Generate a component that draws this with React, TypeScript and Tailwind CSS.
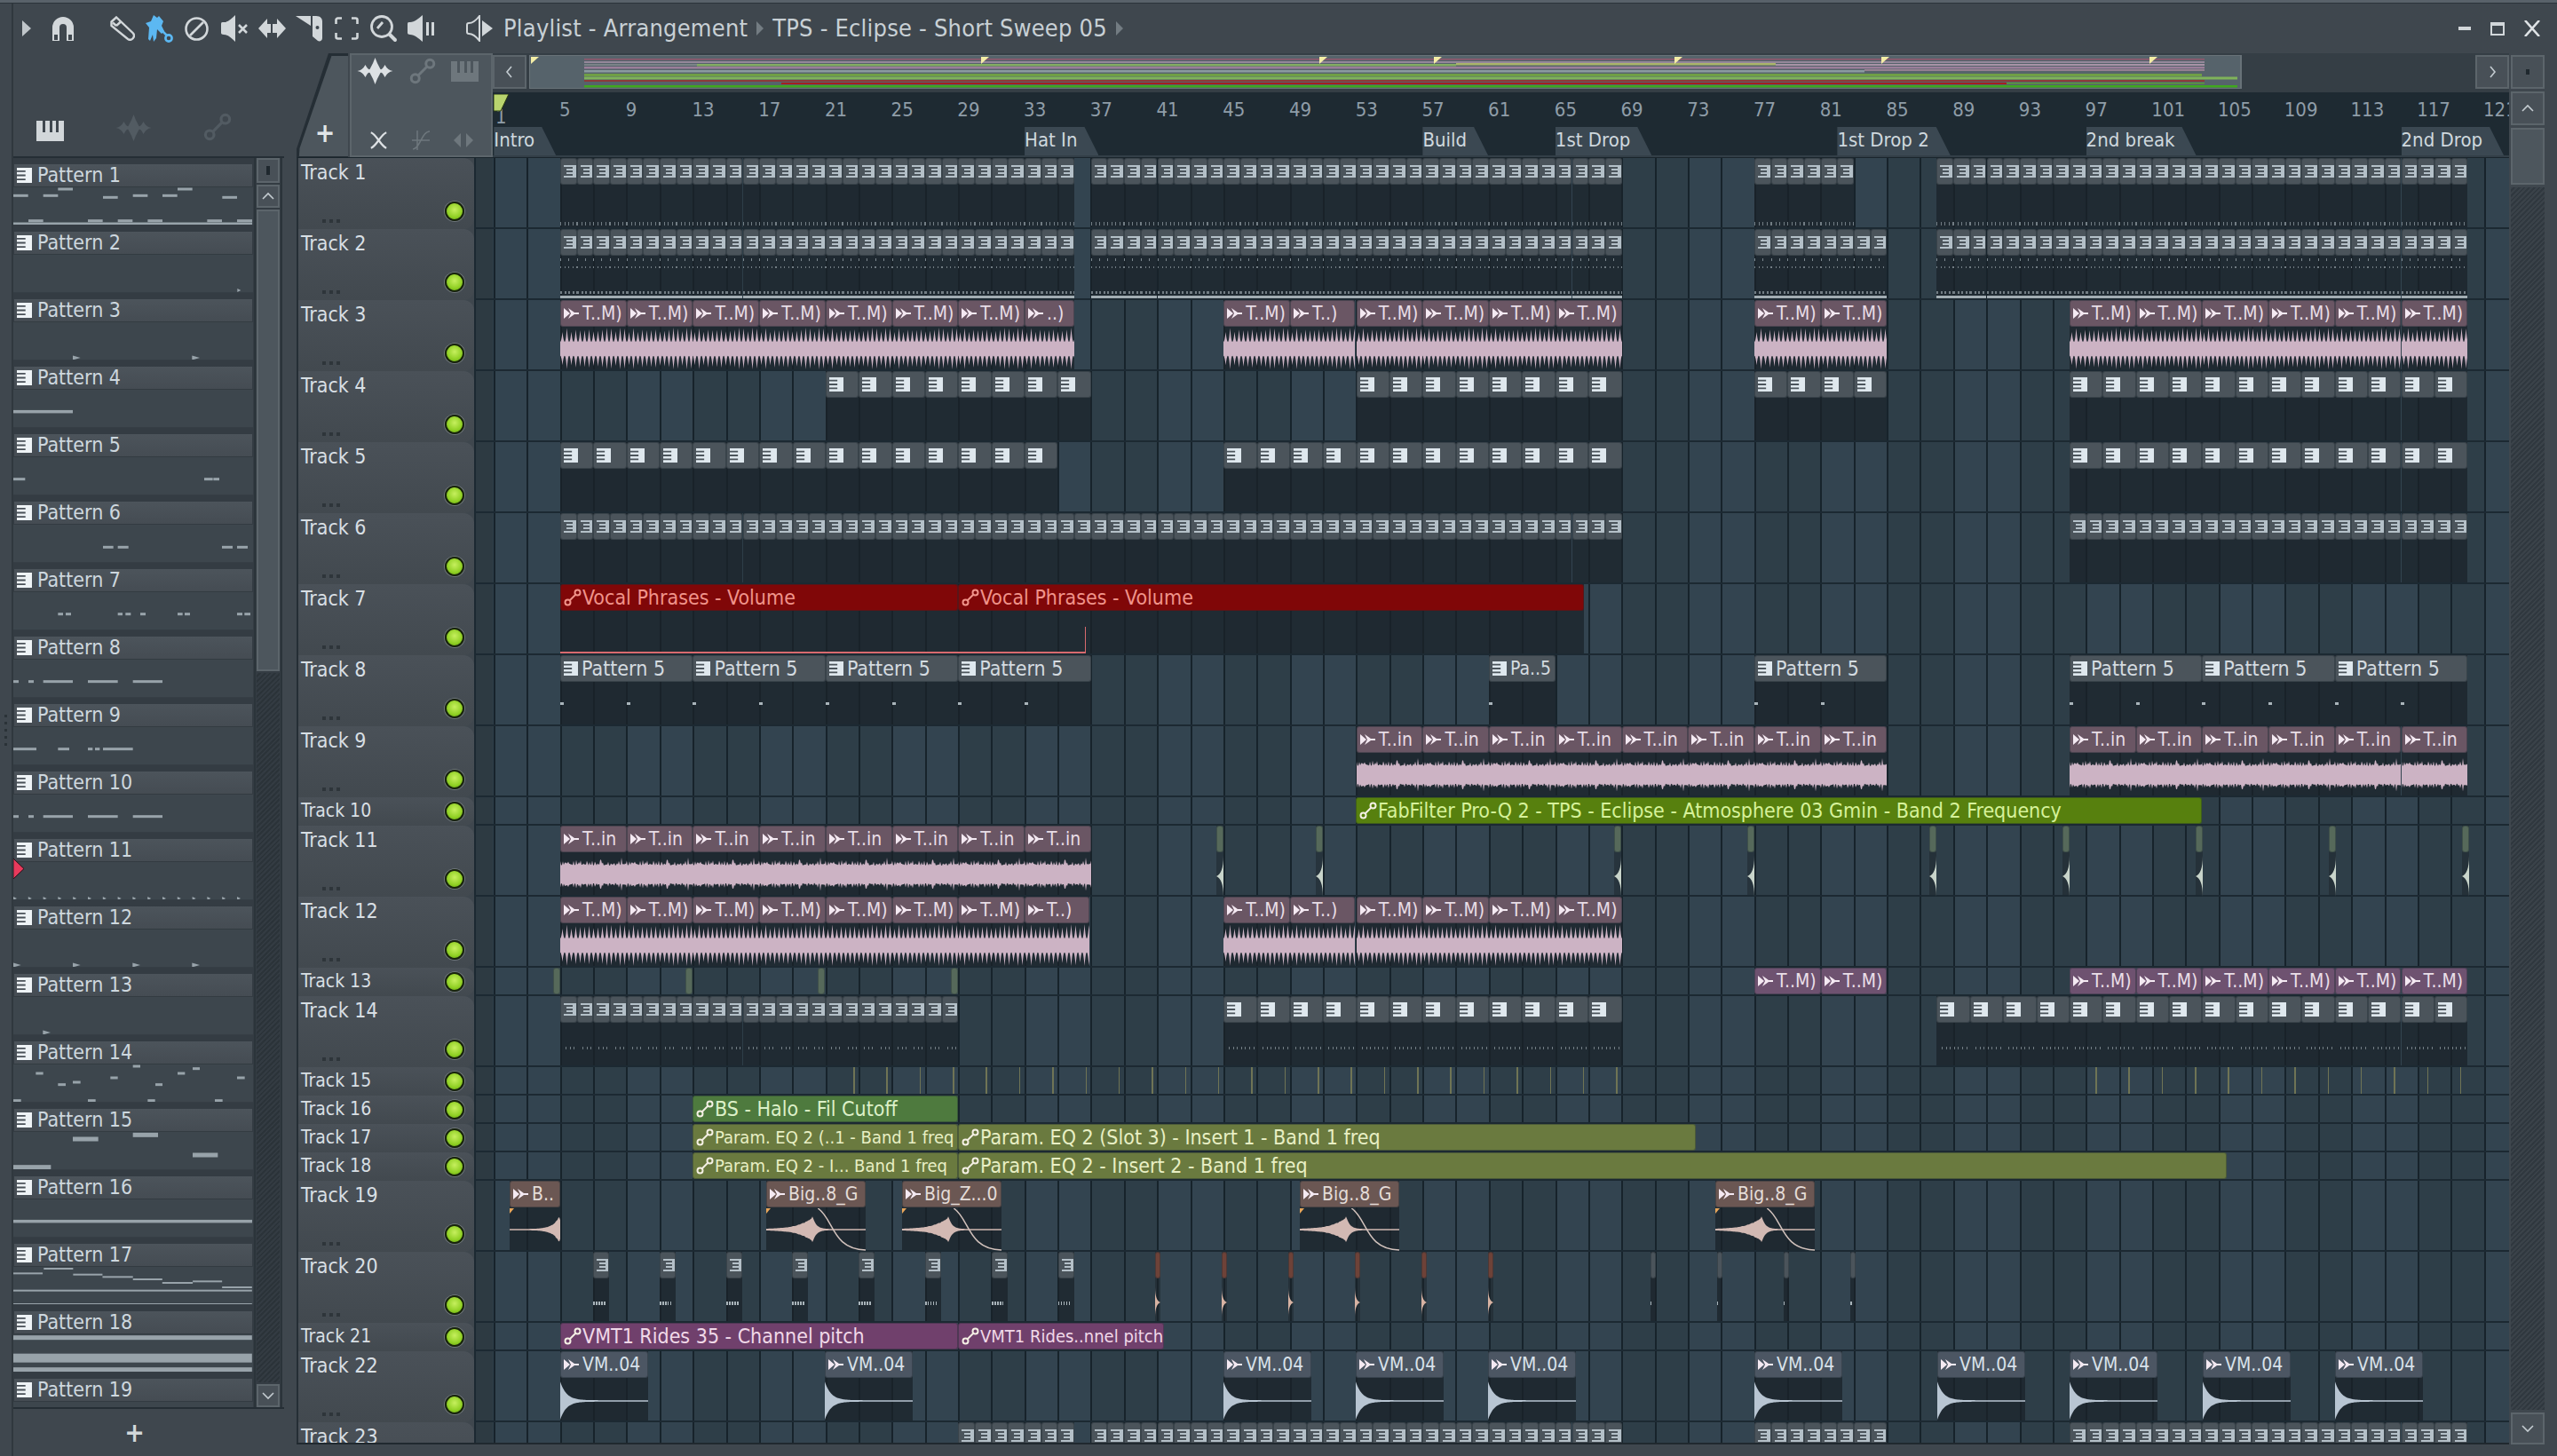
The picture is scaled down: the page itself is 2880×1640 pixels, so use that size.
import type { ReactNode } from 'react';

const BAR = 18.68;
const GRID_LEFT = 536;
const B = (bar: number) => 556.3 + (bar - 1) * BAR;

type Body = 'none' | 'ticks' | 'dots' | 'sparse' | 'mid' | 'comb' | 'noise' | 'big' | 'bigEnd' | 'vm' | 'spike' | 'rustSpike' | 'tiny' | 'auto1' | 'auto2';
type Tone = 'pat' | 'audio' | 'audio13' | 'brown' | 'vm' | 'thin' | 'red' | 'lime' | 'green' | 'olive' | 'purple' | 'rust' | 'tick';
type Icon = 'piano' | 'audio' | 'auto' | 'none';
type Item = { x: number; w: number; label?: string; tone: Tone; icon: Icon; body: Body };
type Track = { name: string; small?: boolean; items: Item[] };

const TONES: Record<Tone, string> = {
  pat: 'bg-[#4b545b] text-[#d4dbe0]',
  audio: 'bg-[#6a5664] text-[#e8dde6]',
  audio13: 'bg-[#6e5270] text-[#eadfe8]',
  brown: 'bg-[#6b5753] text-[#e4dcd8]',
  vm: 'bg-[#4c5663] text-[#d9e2ea]',
  thin: 'bg-[#56695a] text-[#d9e2ea]',
  red: 'bg-[#800708] text-[#f0938a]',
  lime: 'bg-[#57800e] text-[#d6f29a]',
  green: 'bg-[#4e7a3e] text-[#dcf0c8]',
  olive: 'bg-[#6a7a3f] text-[#e8efc4]',
  purple: 'bg-[#70406c] text-[#f0d8e8]',
  rust: 'bg-[#6e4238] text-[#e4dcd8]',
  tick: 'bg-[#56695a]',
};

const cells = (ranges: [number, number][], step: number, body: Body): Item[] =>
  ranges.flatMap(([from, to]) => {
    const out: Item[] = [];
    for (let b = from; b < to - 0.01; b += step) out.push({ x: B(b), w: step * BAR, tone: 'pat', icon: 'piano', body });
    return out;
  });

const run = (bars: number[], w: number, label: string, tone: Tone, icon: Icon, body: Body): Item[] =>
  bars.map((b) => ({ x: B(b), w: w * BAR, label, tone, icon, body }));

const step = (from: number, n: number, by = 4) => Array.from({ length: n }, (_, i) => from + i * by);

const px = (xs: number[], w: number, tone: Tone, icon: Icon, body: Body): Item[] =>
  xs.map((x) => ({ x, w, tone, icon, body }));

const TRACKS: Track[] = [
  { name: 'Track 1', items: cells([[5, 21], [21, 36], [37, 45], [45, 53], [53, 69], [77, 83], [88, 96], [96, 104], [104, 112], [112, 119.7]], 1, 'ticks') },
  { name: 'Track 2', items: cells([[5, 36], [37, 69], [77, 85], [88, 120]], 1, 'dots') },
  {
    name: 'Track 3',
    items: [
      ...run(step(5, 7), 4, 'T..M)', 'audio', 'audio', 'comb'),
      ...run([33], 3, '..)', 'audio', 'audio', 'comb'),
      ...run([45], 4, 'T..M)', 'audio', 'audio', 'comb'),
      ...run([49], 3.9, 'T..)', 'audio', 'audio', 'comb'),
      ...run(step(53, 4), 4, 'T..M)', 'audio', 'audio', 'comb'),
      ...run([77, 81], 4, 'T..M)', 'audio', 'audio', 'comb'),
      ...run(step(96, 6), 4, 'T..M)', 'audio', 'audio', 'comb'),
    ],
  },
  { name: 'Track 4', items: cells([[21, 37], [53, 69], [77, 85], [96, 120]], 2, 'none') },
  { name: 'Track 5', items: cells([[5, 35], [45, 69], [96, 120]], 2, 'none') },
  { name: 'Track 6', items: cells([[5, 37], [37, 69], [96, 120]], 1, 'none') },
  {
    name: 'Track 7',
    items: [
      { x: 631, w: 448, label: 'Vocal Phrases - Volume', tone: 'red', icon: 'auto', body: 'auto1' },
      { x: 1079, w: 705, label: 'Vocal Phrases - Volume', tone: 'red', icon: 'auto', body: 'auto2' },
    ],
  },
  {
    name: 'Track 8',
    items: [
      ...run([5, 13, 21, 29], 8, 'Pattern 5', 'pat', 'piano', 'sparse'),
      ...run([61], 4, 'Pa..5', 'pat', 'piano', 'sparse'),
      ...run([77], 8, 'Pattern 5', 'pat', 'piano', 'sparse'),
      ...run([96, 104, 112], 8, 'Pattern 5', 'pat', 'piano', 'sparse'),
    ],
  },
  {
    name: 'Track 9',
    items: [...run(step(53, 8), 4, 'T..in', 'audio', 'audio', 'noise'), ...run(step(96, 6), 4, 'T..in', 'audio', 'audio', 'noise')],
  },
  {
    name: 'Track 10',
    small: true,
    items: [{ x: 1527, w: 953, label: 'FabFilter Pro-Q 2 - TPS - Eclipse - Atmosphere 03 Gmin - Band 2 Frequency', tone: 'lime', icon: 'auto', body: 'none' }],
  },
  {
    name: 'Track 11',
    items: [
      ...run(step(5, 8), 4, 'T..in', 'audio', 'audio', 'noise'),
      ...px([1370, 1482, 1818, 1968, 2173, 2323, 2473, 2623, 2773], 8, 'thin', 'none', 'spike'),
    ],
  },
  {
    name: 'Track 12',
    items: [
      ...run(step(5, 7), 4, 'T..M)', 'audio', 'audio', 'comb'),
      ...run([33], 3.9, 'T..)', 'audio', 'audio', 'comb'),
      ...run([45], 4, 'T..M)', 'audio', 'audio', 'comb'),
      ...run([49], 3.9, 'T..)', 'audio', 'audio', 'comb'),
      ...run(step(53, 4), 4, 'T..M)', 'audio', 'audio', 'comb'),
    ],
  },
  {
    name: 'Track 13',
    small: true,
    items: [
      ...px([623, 772, 921, 1071], 8, 'thin', 'none', 'none'),
      ...run([77, 81], 4, 'T..M)', 'audio13', 'audio', 'none'),
      ...run(step(96, 6), 4, 'T..M)', 'audio13', 'audio', 'none'),
    ],
  },
  { name: 'Track 14', items: cells([[5, 29]], 1, 'mid').concat(cells([[45, 69], [88, 120]], 2, 'mid')) },
  { name: 'Track 15', small: true, items: [] },
  {
    name: 'Track 16',
    small: true,
    items: [{ x: 780, w: 299, label: 'BS - Halo - Fil Cutoff', tone: 'green', icon: 'auto', body: 'none' }],
  },
  {
    name: 'Track 17',
    small: true,
    items: [
      { x: 780, w: 299, label: 'Param. EQ 2 (..1 - Band 1 freq', tone: 'olive', icon: 'auto', body: 'none' },
      { x: 1079, w: 831, label: 'Param. EQ 2 (Slot 3) - Insert 1 - Band 1 freq', tone: 'olive', icon: 'auto', body: 'none' },
    ],
  },
  {
    name: 'Track 18',
    small: true,
    items: [
      { x: 780, w: 299, label: 'Param. EQ 2 - I... Band 1 freq', tone: 'olive', icon: 'auto', body: 'none' },
      { x: 1079, w: 1429, label: 'Param. EQ 2 - Insert 2 - Band 1 freq', tone: 'olive', icon: 'auto', body: 'none' },
    ],
  },
  {
    name: 'Track 19',
    items: [
      { x: 574, w: 57, label: 'B..', tone: 'brown', icon: 'audio', body: 'bigEnd' },
      { x: 863, w: 112, label: 'Big..8_G', tone: 'brown', icon: 'audio', body: 'big' },
      { x: 1016, w: 112, label: 'Big_Z...0', tone: 'brown', icon: 'audio', body: 'big' },
      { x: 1464, w: 112, label: 'Big..8_G', tone: 'brown', icon: 'audio', body: 'big' },
      { x: 1932, w: 112, label: 'Big..8_G', tone: 'brown', icon: 'audio', body: 'big' },
    ],
  },
  {
    name: 'Track 20',
    items: [
      ...px([668, 743, 818, 892, 967, 1042, 1117, 1192], 18, 'pat', 'piano', 'tiny'),
      ...px([1301, 1376, 1451, 1526, 1601, 1676], 6, 'rust', 'none', 'rustSpike'),
      ...px([1859, 1934, 2009, 2084], 6, 'pat', 'none', 'tiny'),
    ],
  },
  {
    name: 'Track 21',
    small: true,
    items: [
      { x: 631, w: 448, label: 'VMT1 Rides 35 - Channel pitch', tone: 'purple', icon: 'auto', body: 'none' },
      { x: 1079, w: 232, label: 'VMT1 Rides..nnel pitch', tone: 'purple', icon: 'auto', body: 'none' },
    ],
  },
  {
    name: 'Track 22',
    items: px([631, 929, 1378, 1527, 1676, 1976, 2182, 2331, 2481, 2630], 99, 'vm', 'audio', 'vm').map((c) => ({ ...c, label: 'VM..04' })),
  },
  { name: 'Track 23', items: cells([[29, 36], [37, 69], [77, 85], [96, 120]], 1, 'none') },
];

const MARKERS: [string, number][] = [
  ['Intro', 1],
  ['Hat In', 33],
  ['Build', 57],
  ['1st Drop', 65],
  ['1st Drop 2', 82],
  ['2nd break', 97],
  ['2nd Drop', 116],
];

type Note = { x: number; w: number; y: number; h: number; tri?: boolean };

const n = (x1: number, x2: number, yc: number, top: number, h = 3, tri = false): Note => ({
  x: (x1 - 48) / 3,
  w: (x2 - x1) / 3,
  y: (yc - top) / 3 - h / 2,
  h,
  tri,
});
const m = (x1: number, x2: number, yc: number, top: number, h = 2): Note => ({
  x: (x1 - 26) / 1.633,
  w: (x2 - x1) / 1.633,
  y: (yc - top) / 3 - h / 2,
  h,
});

const P8 = [n(48, 66, 534, 460), n(99, 117, 534, 460), n(149, 249, 534, 460), n(300, 401, 534, 460), n(452, 552, 534, 460)];

const PATTERNS: Note[][] = [
  [
    ...[[48, 98, 152], [149, 199, 152], [199, 249, 130], [351, 401, 158], [452, 502, 152], [552, 602, 152], [603, 653, 130], [754, 804, 158], [99, 149, 237], [300, 350, 237], [401, 451, 237], [502, 552, 237], [703, 753, 237], [804, 855, 237], [48, 855, 247]].map((a) => n(a[0], a[1], a[2], 124)),
  ],
  [n(805, 817, 472, 352, 4, true)],
  [n(249, 275, 700, 580, 5, true), n(652, 678, 700, 580, 5, true)],
  [n(48, 249, 882, 808, 3.5)],
  [n(48, 88, 1110, 1036), n(693, 722, 1110, 1036), n(724, 744, 1110, 1036)],
  [n(351, 386, 78, 2), n(401, 437, 78, 2), n(753, 789, 78, 2), n(804, 840, 78, 2)],
  [[199, 216], [225, 243], [401, 417], [427, 445], [477, 495], [603, 620], [627, 645], [804, 822], [829, 849]].map((a) => n(a[0], a[1], 306, 232)),
  P8,
  [[48, 126], [199, 237], [300, 316], [324, 340], [351, 452]].map((a) => n(a[0], a[1], 762, 688)),
  P8,
  step(48, 16, 50.4).map((x) => n(x, x + 12, 1267, 1144, 4, true)),
  [n(48, 74, 262, 142, 5, true), n(249, 275, 262, 142, 5, true), n(451, 477, 262, 142, 5, true), n(652, 678, 262, 142, 5, true)],
  [n(148, 174, 490, 370, 5, true)],
  [[124, 149, 628], [199, 225, 666], [249, 275, 658], [376, 401, 643], [452, 477, 604], [528, 552, 666], [603, 628, 628], [654, 678, 612], [804, 830, 643], [48, 74, 720], [300, 326, 720], [502, 527, 720], [729, 755, 720]].map((a) => n(a[0], a[1], a[2], 598)),
  [n(249, 335, 850, 826, 5), n(452, 537, 836, 826, 5), n(654, 739, 904, 826, 5), n(48, 175, 945, 826, 5)],
  [n(48, 855, 1128, 1054, 3.5)],
  [m(26, 80, 462, 440), m(82, 136, 446, 440), m(136, 190, 466, 440), m(190, 246, 474, 440), m(246, 300, 482, 440), m(300, 356, 494, 440), m(356, 410, 489, 440), m(410, 465, 509, 440), m(26, 465, 520, 440), m(26, 465, 566, 440)],
  [m(26, 465, 681, 670, 5), m(26, 465, 750, 670, 10), m(26, 465, 789, 670, 5)],
  [],
];

const OVERVIEW: [number, number, number, number, string][] = [
  [658, 2483, 66, 1.5, '#94586e'],
  [658, 2483, 69, 2, '#95879a'],
  [658, 785, 72, 2, '#7b8388'],
  [785, 1640, 72, 2.5, '#84ad62'],
  [1640, 2000, 71, 2.5, '#a9b46a'],
  [2000, 2483, 72, 2, '#a893a6'],
  [658, 2483, 75, 2.5, '#9a7e99'],
  [658, 2100, 79, 2.5, '#8b9aa0'],
  [2100, 2483, 78, 2, '#94808f'],
  [658, 2480, 83, 3, '#6f9f45'],
  [658, 2520, 86.5, 3, '#7fb35a'],
  [658, 2483, 90, 2, '#8d3a3a'],
  [880, 2260, 93, 2, '#a62020'],
  [2260, 2483, 93, 1.5, '#5d9c3a'],
  [658, 2520, 96, 2.5, '#3fa81e'],
];

// small deterministic noise so the waveforms stay stable between runs
const rnd = (i: number) => {
  const v = Math.sin(i * 12.9898) * 43758.5453;
  return v - Math.floor(v);
};

function wavePath(w: number, h: number, amp: (x: number, i: number) => number, dx = 1) {
  const c = h / 2;
  const top: string[] = [];
  const bottom: string[] = [];
  let i = 0;
  for (let x = 0; x <= w + dx; x += dx, i++) {
    const a = amp(x, i);
    top.push(`${x.toFixed(1)} ${(c - a).toFixed(1)}`);
    bottom.unshift(`${x.toFixed(1)} ${(c + a * 0.96).toFixed(1)}`);
  }
  return `M${top.join('L')}L${bottom.join('L')}Z`;
}

function combAmp(x: number, i: number) {
  const p = ((x % 5) + 5) % 5;
  const tooth = 1 - Math.abs(p - 2.5) / 2.5;
  return 8 + tooth * tooth * (11 + rnd(Math.floor(x / 5)) * 5);
}

function Wave({ w, kind }: { w: number; kind: 'comb' | 'noise' }) {
  const d =
    kind === 'comb'
      ? wavePath(w, 48, combAmp, 0.5)
      : wavePath(w, 48, (x, i) => 10 + rnd(i + x) * 3 + (i % 3 === 0 ? rnd(i) * 5 : 0) + (i % 23 === 0 ? 5 : 0));
  return (
    <svg className="absolute left-0 top-[1px]" width={w} height={48}>
      <path d={d} fill="#ccb3c4" />
    </svg>
  );
}

function BigWave({ w, end }: { w: number; end?: boolean }) {
  const peak = end ? w - 1 : w * 0.47;
  const d = wavePath(w, 48, (x, i) => {
    const k = x < peak ? Math.exp(-(peak - x) / (w * 0.13)) : Math.exp(-(x - peak) / 4);
    return 0.7 + k * 13 + (x < peak ? rnd(i) * k * 2 : 0);
  });
  return (
    <svg className="absolute left-0 top-[1px]" width={w} height={48}>
      <path d={d} fill="#d2b9b3" />
      <path d="M0 0 L5 0 L0 6 Z" fill="#e8a65a" />
      {!end && <path d={`M${w * 0.52} 0 C${w * 0.68} 12 ${w * 0.66} 46 ${w} 47`} fill="none" stroke="#d2c2bc" strokeWidth="1.5" />}
    </svg>
  );
}

function VmWave({ w }: { w: number }) {
  const d = wavePath(w, 44, (x) => 0.8 + 21 * Math.exp(-x / 7));
  return (
    <svg className="absolute left-0 top-[4px]" width={w} height={44}>
      <path d={d} fill="#b8c5d2" />
    </svg>
  );
}

function Spike({ w, color, flip }: { w: number; color: string; flip?: boolean }) {
  return (
    <svg className="absolute left-0 top-[4px]" width={w} height={46} viewBox="0 0 8 46">
      <path d={flip ? 'M0 0 C0 14 3 21 8 23 C3 25 0 32 0 46 Z' : 'M8 0 C8 14 5 21 0 23 C5 25 8 32 8 46 Z'} fill={color} />
    </svg>
  );
}

function ClipBody({ it }: { it: Item }) {
  switch (it.body) {
    case 'ticks':
      return <div className="absolute bottom-[2px] left-0 right-0 h-[4px] bg-[repeating-linear-gradient(90deg,#727d84_0,#727d84_1px,transparent_1px,transparent_4.6px)]" />;
    case 'dots':
      return (
        <>
          <div className="absolute left-0 right-0 top-[3px] h-[3px] bg-[repeating-linear-gradient(90deg,#7c878e_0,#7c878e_1px,transparent_1px,transparent_9.3px)]" />
          <div className="absolute left-0 right-0 top-[12px] h-[2px] bg-[repeating-linear-gradient(90deg,#727d84_0,#727d84_1px,transparent_1px,transparent_4.6px)]" />
          <div className="absolute bottom-[5px] left-0 right-0 h-[3px] bg-[repeating-linear-gradient(90deg,#727d84_0,#727d84_2px,transparent_2px,transparent_4.6px)]" />
          <div className="absolute bottom-0 left-0 right-0 h-[3px] bg-[#a2adb3]" />
        </>
      );
    case 'sparse': {
      const count = Math.max(1, Math.round(it.w / 74.7));
      return (
        <>
          {Array.from({ length: count }, (_, i) => (
            <div key={i} className="absolute top-[23px] h-[3px] w-[4px] bg-[#a9b4ba]" style={{ left: i * 74.72 }} />
          ))}
        </>
      );
    }
    case 'mid':
      return <div className="absolute left-[6px] right-0 top-[27px] h-[3px] bg-[repeating-linear-gradient(90deg,#727d84_0,#727d84_1px,transparent_1px,transparent_4.6px)]" />;
    case 'comb':
      return <Wave w={it.w} kind="comb" />;
    case 'noise':
      return <Wave w={it.w} kind="noise" />;
    case 'big':
      return <BigWave w={it.w} />;
    case 'bigEnd':
      return <BigWave w={it.w} end />;
    case 'vm':
      return <VmWave w={it.w} />;
    case 'spike':
      return <Spike w={it.w} color="#c8d4ca" />;
    case 'rustSpike':
      return <Spike w={it.w} color="#d8b3a3" flip />;
    case 'tiny':
      return <div className="absolute left-0 right-[4px] top-[26px] h-[4px] bg-[repeating-linear-gradient(90deg,#a9b4ba_0,#a9b4ba_1.5px,transparent_1.5px,transparent_3px)]" />;
    case 'auto1':
      return <div className="absolute bottom-0 left-0 right-0 h-[2px] bg-[#d86a6e]" />;
    case 'auto2':
      return (
        <>
          <div className="absolute bottom-0 left-0 h-[2px] w-[144px] bg-[#d86a6e]" />
          <div className="absolute bottom-0 left-[143px] h-[30px] w-[1px] bg-[#d86a6e]" />
        </>
      );
    default:
      return null;
  }
}

function PianoGlyph({ size = 14, color = '#b4c0c8', open }: { size?: number; color?: string; open?: boolean }) {
  return (
    <svg width={size} height={size} viewBox="0 0 14 14" className="shrink-0">
      <path fill={color} d={open ? 'M0 0H14V14H0V12H10V10H3V8H10V6H3V4H10V2H0Z' : 'M0 0H14V14H0V11.6H8V10H0V7.9H8V6.2H0V4H8V2.400H0Z'} />
    </svg>
  );
}

function AudioGlyph({ color = '#f4e9f2' }: { color?: string }) {
  return (
    <svg width={17} height={16} viewBox="0 0 17 16" className="shrink-0">
      <path fill={color} d="M0 2 L7 8 L0 14 Z M5 2 L12 7 H17 V9 H12 L5 14 L8 8 Z" />
    </svg>
  );
}

function AutoGlyph({ color = '#ffffff', size = 20 }: { color?: string; size?: number }) {
  return (
    <svg width={size} height={size} viewBox="0 0 20 20" fill="none" stroke={color} strokeWidth="2" className="shrink-0">
      <circle cx="4.5" cy="15.5" r="3" />
      <circle cx="15.5" cy="4.5" r="3" />
      <path d="M7 13L13 7" />
    </svg>
  );
}

function Clip({ it, small }: { it: Item; small?: boolean }) {
  const squeezed = it.label?.includes('..');
  const sizeClass = !squeezed ? 'text-[23px]' : it.icon === 'auto' ? 'text-[20px]' : 'text-[21px]';
  return (
    <div className="absolute bottom-0 top-0" style={{ left: it.x - GRID_LEFT, width: it.w }}>
      {!small && it.body !== 'spike' && it.body !== 'rustSpike' && <div className="absolute inset-0 bg-[#1b2329]/75" />}
      {!small && (it.body === 'spike' || it.body === 'rustSpike') && <div className="absolute inset-0 bg-[#1b2329]/50" />}
      <div className={`relative flex h-[30px] items-center overflow-hidden whitespace-nowrap rounded-[3px] border border-[#1f2a31]/40 pl-[3px] leading-none ${it.icon === 'auto' ? 'gap-[1px]' : 'gap-[4px]'} ${sizeClass} ${TONES[it.tone]}`}>
        {it.icon === 'piano' && (it.label || it.w > 30 ? <PianoGlyph color="#dfe8ee" size={16} /> : <PianoGlyph open />)}
        {it.icon === 'audio' && <AudioGlyph />}
        {it.icon === 'auto' && <AutoGlyph color={it.tone === 'red' ? '#f0938a' : '#f4efe4'} />}
        {it.label && <span>{it.label}</span>}
      </div>
      {!small && (
        <div className="absolute bottom-0 left-0 right-0 top-[30px]">
          <ClipBody it={it} />
        </div>
      )}
    </div>
  );
}

function GridRow({ track }: { track: Track }) {
  return (
    <div className={`relative shrink-0 border-b-2 border-[#1c2932] ${track.small ? 'h-[32px]' : 'h-[80px]'}`}>
      {track.name === 'Track 15' && (
        <>
          <div className="absolute bottom-0 left-[425px] top-0 w-[861px] bg-[repeating-linear-gradient(90deg,#6f7455_0,#6f7455_1.5px,transparent_1.5px,transparent_37.36px)]" />
          <div className="absolute bottom-0 left-[1824px] top-0 w-[416px] bg-[repeating-linear-gradient(90deg,#6f7455_0,#6f7455_1.5px,transparent_1.5px,transparent_37.36px)]" />
        </>
      )}
      {track.items.map((it, i) => (
        <Clip key={i} it={it} small={track.small} />
      ))}
    </div>
  );
}

function Led() {
  return <span className="block h-[22px] w-[22px] shrink-0 rounded-full border-2 border-[#18240c] bg-[radial-gradient(circle_at_50%_40%,#c6ef5e,#90d024_60%,#5a9a0c)] ring-1 ring-[#6e757a]" />;
}

function TrackHeader({ track }: { track: Track }) {
  if (track.small) {
    return (
      <div className="flex h-[32px] shrink-0 items-center justify-between rounded-r-[10px] bg-gradient-to-b from-[#4a5158] to-[#42494f] pl-[3px] pr-[11px] text-[21px] text-[#d8dfe4]">
        <span>{track.name}</span>
        <Led />
      </div>
    );
  }
  return (
    <div className="flex h-[80px] shrink-0 justify-between rounded-r-[12px] bg-gradient-to-b from-[#4a5158] to-[#42494f] pl-[3px] pr-[11px] text-[23px] text-[#d8dfe4]">
      <div className="flex flex-col justify-between pb-[7px] pt-[1px]">
        <span className="leading-[30px]">{track.name}</span>
        <span className="ml-[24px] flex gap-[4px]">
          <i className="h-[4px] w-[4px] bg-[#2e353a]" />
          <i className="h-[4px] w-[4px] bg-[#2e353a]" />
          <i className="h-[4px] w-[4px] bg-[#2e353a]" />
        </span>
      </div>
      <div className="pt-[49px]">
        <Led />
      </div>
    </div>
  );
}

function PatternRow({ index, notes }: { index: number; notes: Note[] }) {
  return (
    <div className="h-[76px] shrink-0">
      <div className="ml-[1px] flex h-[26px] w-[268px] items-center gap-[6px] border-b border-[#333b41] bg-gradient-to-b from-[#4c545b] to-[#454c53] pl-[3px] text-[23px] text-[#cdd7de]">
        <PianoGlyph size={17} color="#eef3f6" />
        <span>Pattern {index + 1}</span>
      </div>
      <svg width={270} height={43} className="block border-b border-[#363e45] bg-[#3d464d]">
        {notes.map((note, i) =>
          note.tri ? (
            <polygon key={i} points={`${note.x},${note.y} ${note.x + note.w},${note.y + note.h / 2} ${note.x},${note.y + note.h}`} fill="#98a3aa" />
          ) : (
            <rect key={i} x={note.x} y={note.y} width={note.w} height={note.h} fill="#98a3aa" />
          ),
        )}
      </svg>
    </div>
  );
}

function ScrollButton({ children, className }: { children?: ReactNode; className: string }) {
  return <div className={`flex items-center justify-center border-2 border-[#5c656b] bg-[#485057] ${className}`}>{children}</div>;
}

function Chevron({ d }: { d: string }) {
  return (
    <svg width={18} height={18} viewBox="0 0 18 18" fill="none" stroke="#c4ccd1" strokeWidth="1.6">
      <path d={d} />
    </svg>
  );
}

const ICON = '#d2d7da';

function TitleBar() {
  return (
    <div className="flex h-[56px] shrink-0 items-center text-[27px] tracking-[0.2px] text-[#c8d0d5]">
      <svg className="ml-[10px]" width={10} height={18} viewBox="0 0 10 18"><path d="M0 0L10 9L0 18Z" fill="#c0c6ca" /></svg>
      <svg className="ml-[23px]" width={26} height={28} viewBox="0 0 26 28">
        <path fill={ICON} d="M1 28V13a12 12 0 0 1 24 0V28H17V13a4 4 0 0 0-8 0V28Z" />
        <path fill="#3f474e" d="M3 21h4v6H3zM19 21h4v6h-4z" />
      </svg>
      <svg className="ml-[40px]" width={28} height={28} viewBox="0 0 28 28" fill="none" stroke={ICON} strokeWidth="2.4">
        <path d="M1.5 6.5L7 1.5L26 19.5a4.5 4.5 0 0 1-6 6.5L1.5 11Z" />
        <path d="M3 7.5L7 11M7 11L12 6.5" />
      </svg>
      <svg className="ml-[12px]" width={31} height={31} viewBox="0 0 31 31">
        <path fill="#5cb8f2" d="M9 0L13 3L15 1L20 7L18 12L21 18L18 21L13 16L12 26L9 30L8 22L5 29L3 27L4 14L0 9L6 7Z" />
        <path fill="none" stroke="#5cb8f2" strokeWidth="2.5" d="M17 16L24 23" />
        <circle cx="26" cy="26" r="3.6" fill="none" stroke="#5cb8f2" strokeWidth="2.6" />
      </svg>
      <svg className="ml-[13px]" width={27} height={27} viewBox="0 0 27 27" fill="none" stroke={ICON} strokeWidth="2.6">
        <circle cx="13.5" cy="13.5" r="12" />
        <path d="M6 21L21 6" />
      </svg>
      <svg className="ml-[14px]" width={31} height={30} viewBox="0 0 31 30">
        <path fill={ICON} d="M0 10C0 8 1 8 3 8C8 8 12 4 16 0V30C12 26 8 22 3 22C1 22 0 21 0 20Z" />
        <path stroke={ICON} strokeWidth="2.6" d="M20 11L29 20M29 11L20 20" />
      </svg>
      <svg className="ml-[11px]" width={31} height={24} viewBox="0 0 31 24">
        <path fill={ICON} d="M0 12L10 1V7H14V17H10V23ZM31 12L21 1V7H16V17H21V23Z" />
      </svg>
      <svg className="ml-[11px]" width={31} height={30} viewBox="0 0 31 30">
        <path fill={ICON} d="M0 1H17V12ZM19 1H23C28 1 30 4 30 7V26C30 29 27 30 25 29L19 24Z" />
        <circle cx="24.5" cy="14" r="2" fill="#3f474e" />
      </svg>
      <svg className="ml-[13px]" width={27} height={26} viewBox="0 0 27 26" fill="none" stroke={ICON} strokeWidth="2.6">
        <path d="M1.5 8V3.5a2 2 0 0 1 2-2H8M19 1.5h4.5a2 2 0 0 1 2 2V8M25.5 18v4.5a2 2 0 0 1-2 2H19M8 24.5H3.5a2 2 0 0 1-2-2V18" />
      </svg>
      <svg className="ml-[13px]" width={31} height={31} viewBox="0 0 31 31" fill="none" stroke={ICON} strokeWidth="2.8">
        <circle cx="13" cy="13" r="11.5" />
        <path d="M8 15L14 8" />
        <path d="M22 22L28 28" strokeWidth="4" strokeLinecap="round" />
      </svg>
      <svg className="ml-[11px]" width={30} height={30} viewBox="0 0 30 30">
        <path fill={ICON} d="M0 10C0 8 1 8 3 8C8 8 12 4 17 0V30C12 26 8 22 3 22C1 22 0 21 0 20Z" />
        <path fill={ICON} d="M21 8h3v15h-3zM27 8h3v15h-3z" />
      </svg>
      <svg className="ml-[36px]" width={30} height={30} viewBox="0 0 30 30">
        <path fill="none" stroke={ICON} strokeWidth="2" d="M1 11C1 9.500 2 9 3 9C7 9 12 5 15 1V29C12 25 7 21 3 21C2 21 1 20.500 1 19Z" />
        <path fill={ICON} d="M18 6L30 15L18 24Z" />
      </svg>
      <span className="ml-[12px] whitespace-nowrap">Playlist - Arrangement</span>
      <svg className="ml-[10px]" width={8} height={16} viewBox="0 0 8 16"><path d="M0 0L8 8L0 16Z" fill="#737c82" /></svg>
      <span className="ml-[10px] whitespace-nowrap">TPS - Eclipse - Short Sweep 05</span>
      <svg className="ml-[10px]" width={8} height={16} viewBox="0 0 8 16"><path d="M0 0L8 8L0 16Z" fill="#737c82" /></svg>
      <div className="ml-auto mr-[19px] flex items-center gap-[22px]">
        <div className="h-[4px] w-[14px] bg-[#d2d7da]" />
        <div className="h-[15px] w-[16px] border-2 border-t-4 border-[#d2d7da]" />
        <svg width={18} height={18} viewBox="0 0 18 18" stroke="#dfe3e6" strokeWidth="2.6"><path d="M1 0L17 18M17 0L1 18" /></svg>
      </div>
    </div>
  );
}

function WaveGlyph({ color }: { color: string }) {
  return (
    <svg width={41} height={30} viewBox="0 0 40 30" className="shrink-0">
      <path fill={color} d="M0 15Q6 14 9 8Q12 14 14 13Q18 6 20 0Q22 6 26 13Q28 14 31 8Q34 14 40 15Q34 16 31 22Q28 16 26 17Q22 24 20 30Q18 24 14 17Q12 16 9 22Q6 16 0 15Z" />
    </svg>
  );
}

function KeysGlyph({ color, notch }: { color: string; notch: string }) {
  return (
    <svg width={31} height={23} viewBox="0 0 31 23" className="shrink-0">
      <path fill={color} d="M0 0H31V23H0Z" />
      <path fill={notch} d="M7 0H10V13H7ZM15 0H18V13H15ZM22 0H25V13H22Z" />
    </svg>
  );
}

function Picker() {
  return (
    <div className="flex w-[305px] shrink-0 flex-col">
      <div className="flex h-[116px] shrink-0 items-end gap-[58px] pb-[17px] pl-[26px]">
        <KeysGlyph color="#d2d7da" notch="#3f474e" />
        <WaveGlyph color="#525b62" />
        <AutoGlyph color="#525b62" size={32} />
      </div>
      <div className="flex h-[1411px] shrink-0 border-y-2 border-[#252e35]">
        <div className="relative flex h-full w-[271px] shrink-0 flex-col overflow-hidden bg-[#343c43] pt-[7px]">
          {PATTERNS.map((notes, i) => (
            <PatternRow key={i} index={i} notes={notes} />
          ))}
          <svg className="absolute left-0 top-[789px]" width={13} height={23} viewBox="0 0 13 23">
            <path d="M0 0L12 11.500L0 23Z" fill="#e83a5c" stroke="#2a1018" strokeWidth="1" />
          </svg>
        </div>
        <div className="flex w-[32px] shrink-0 flex-col gap-[2px] border-x-2 border-[#2b343a] bg-[#343c43] px-[1px]">
          <ScrollButton className="h-[28px] shrink-0"><div className="h-[10px] w-[4px] bg-[#1f282e]" /></ScrollButton>
          <ScrollButton className="h-[26px] shrink-0"><Chevron d="M3 12L9 6L15 12" /></ScrollButton>
          <div className="h-[520px] shrink-0 border-2 border-[#5c656b] bg-[#4d565d]" />
          <div className="flex-1 bg-[repeating-linear-gradient(135deg,#333b42_0,#333b42_2px,#2b3339_2px,#2b3339_4px)]" />
          <ScrollButton className="h-[26px] shrink-0"><Chevron d="M3 6L9 12L15 6" /></ScrollButton>
        </div>
      </div>
      <div className="flex flex-1 items-center justify-center pr-[32px] text-[30px] font-bold leading-none text-[#d2d7da]">+</div>
    </div>
  );
}

function PlaylistTabs() {
  return (
    <div className="flex h-[117px] w-[221px] shrink-0 gap-[2px]">
      <div className="relative h-full w-[58px] shrink-0 bg-[#252e35] [clip-path:polygon(62%_0,100%_0,100%_100%,0_100%,0_92%)]">
        <div className="absolute inset-x-0 bottom-[1px] top-[3px] flex items-end justify-center bg-[#4d565d] pb-[4px] pl-[6px] text-[30px] font-bold text-[#e0e5e8] [clip-path:polygon(68%_0,100%_0,100%_100%,5%_100%,6%_92%)]">+</div>
      </div>
      <div className="flex flex-1 flex-col justify-between border-2 border-[#5c656b] bg-[#4d565d] px-[6px] py-[3px]">
        <div className="flex items-center justify-between pr-[8px]">
          <WaveGlyph color="#dde1e4" />
          <AutoGlyph color="#6e777d" size={30} />
          <KeysGlyph color="#6e777d" notch="#4d565d" />
        </div>
        <div className="flex items-center justify-between pb-[3px] pl-[14px] pr-[14px]">
          <svg width={21} height={20} viewBox="0 0 24 22" fill="none" stroke="#dde1e4" strokeWidth="2.6"><path d="M2 1C9 3 15 19 22 21M22 1C15 3 9 19 2 21" /></svg>
          <svg width={22} height={22} viewBox="0 0 22 22" fill="none" stroke="#6e777d" strokeWidth="1.5"><path d="M1 11H21M7 0V22M2 21C10 21 12 1 21 1" /></svg>
          <svg width={22} height={20} viewBox="0 0 22 20"><path fill="#6e777d" d="M0 10L8 2V18ZM22 10L14 2V18Z" /></svg>
        </div>
      </div>
    </div>
  );
}

function Ruler() {
  const labels = step(5, 30);
  return (
    <div className="relative h-[39px] overflow-hidden bg-[#1e2a32] text-[22px] leading-none text-[#8f9da8]">
      <span className="absolute left-[3px] top-[17px] text-[#8f9da8]">1</span>
      {labels.map((bar) => (
        <span key={bar} className="absolute top-[9px]" style={{ left: B(bar) - 556 }}>{bar}</span>
      ))}
      <svg className="absolute left-[1px] top-[2px]" width={18} height={20} viewBox="0 0 18 20">
        <path d="M0 0H17L8 19H0Z" fill="#b9d46e" stroke="#2a3a10" strokeWidth="1" />
      </svg>
    </div>
  );
}

function MarkerLane() {
  return (
    <div className="relative h-[34px] overflow-hidden border-b-2 border-[#333f48] bg-[#1e2a32]">
      {MARKERS.map(([name, bar]) => (
        <div
          key={name}
          className="absolute bottom-0 top-0 whitespace-nowrap bg-[#3b4852] pr-[24px] text-[22px] leading-[30px] text-[#cfd8de] [clip-path:polygon(0_0,calc(100%-16px)_0,100%_100%,0_100%)]"
          style={{ left: B(bar) - 555 }}
        >
          {name}
        </div>
      ))}
    </div>
  );
}

function Overview() {
  return (
    <div className="flex h-[44px] shrink-0 items-start gap-[3px] bg-[#353e45] pt-[2px]">
      <ScrollButton className="h-[38px] w-[38px] shrink-0"><Chevron d="M11 3L6 9L11 15" /></ScrollButton>
      <div className="relative h-[38px] w-[2160px] shrink-0">
        <svg width={2160} height={38} viewBox="596 62 2160 38" className="absolute inset-0">
          <rect x={596} y={62} width={1928} height={38} fill="#56636b" stroke="#687278" strokeWidth="2" />
          {OVERVIEW.map(([x1, x2, y, h, c], i) => (
            <rect key={i} x={x1} y={y} width={x2 - x1} height={h} fill={c} />
          ))}
          {[598, 1105, 1486, 1615, 1886, 2119, 2421].map((x) => (
            <path key={x} d={`M${x} 64H${x + 9}L${x} 72Z`} fill="#f4eea6" />
          ))}
        </svg>
      </div>
      <ScrollButton className="ml-auto h-[38px] w-[38px] shrink-0"><Chevron d="M7 3L12 9L7 15" /></ScrollButton>
    </div>
  );
}

function VerticalScroll() {
  return (
    <div className="ml-[2px] flex h-[1567px] w-[38px] shrink-0 flex-col gap-[3px] pt-[2px]">
      <ScrollButton className="h-[38px] shrink-0"><div className="h-[6px] w-[4px] bg-[#1f282e]" /></ScrollButton>
      <ScrollButton className="h-[38px] shrink-0"><Chevron d="M3 12L9 6L15 12" /></ScrollButton>
      <div className="h-[64px] shrink-0 border-2 border-[#5c656b] bg-[#4d565d]" />
      <div className="flex-1 bg-[repeating-linear-gradient(135deg,#3a4249_0,#3a4249_2px,#30383f_2px,#30383f_4px)]" />
      <ScrollButton className="h-[36px] shrink-0"><Chevron d="M3 6L9 12L15 6" /></ScrollButton>
    </div>
  );
}

export default function App() {
  return (
    <div className="flex h-[1640px] w-[2880px] flex-col overflow-hidden bg-[#3f474e] font-['DejaVu_Sans_Condensed','DejaVu_Sans',sans-serif] [font-stretch:condensed]">
      <div className="h-[4px] shrink-0 border-b border-[#2c343a] bg-[#59626a]" />
      <div className="flex min-h-0 flex-1">
        <div className="flex w-[15px] shrink-0 flex-col items-center justify-center gap-[5px] border-r-2 border-[#30383e]">
          <i className="h-[3px] w-[3px] bg-[#2a3237]" />
          <i className="h-[3px] w-[3px] bg-[#2a3237]" />
          <i className="h-[3px] w-[3px] bg-[#2a3237]" />
          <i className="h-[3px] w-[3px] bg-[#2a3237]" />
          <i className="h-[3px] w-[3px] bg-[#2a3237]" />
        </div>
        <div className="flex min-w-0 flex-1 flex-col">
          <TitleBar />
          <div className="flex min-h-0 flex-1">
            <Picker />
            <div className="ml-[14px] flex h-[1567px] w-[2492px] shrink-0 flex-col border-b-2 border-[#20292f]">
              <div className="flex shrink-0">
                <PlaylistTabs />
                <div className="flex min-w-0 flex-1 flex-col">
                  <Overview />
                  <Ruler />
                  <MarkerLane />
                </div>
              </div>
              <div className="flex min-h-0 flex-1 border-t border-[#1a252c] border-l-2 border-l-[#252e35]">
                <div className="flex w-[198px] shrink-0 flex-col overflow-hidden">
                  {TRACKS.map((t) => (
                    <TrackHeader key={t.name} track={t} />
                  ))}
                </div>
                <div className="relative min-w-0 flex-1 overflow-hidden border-l-2 border-[#1c2932] [background-image:repeating-linear-gradient(90deg,#17232b_20px,#17232b_22px,transparent_22px,transparent_57.36px),repeating-linear-gradient(90deg,#2e3e48_95px,#2e3e48_169.72px,#334450_169.72px,#334450_244.44px)]">
                  <div className="absolute bottom-0 left-0 top-0 w-[19px] bg-[#2d3a42]" />
                  <div className="relative flex flex-col">
                    {TRACKS.map((t) => (
                      <GridRow key={t.name} track={t} />
                    ))}
                  </div>
                </div>
              </div>
            </div>
            <VerticalScroll />
          </div>
        </div>
      </div>
    </div>
  );
}
